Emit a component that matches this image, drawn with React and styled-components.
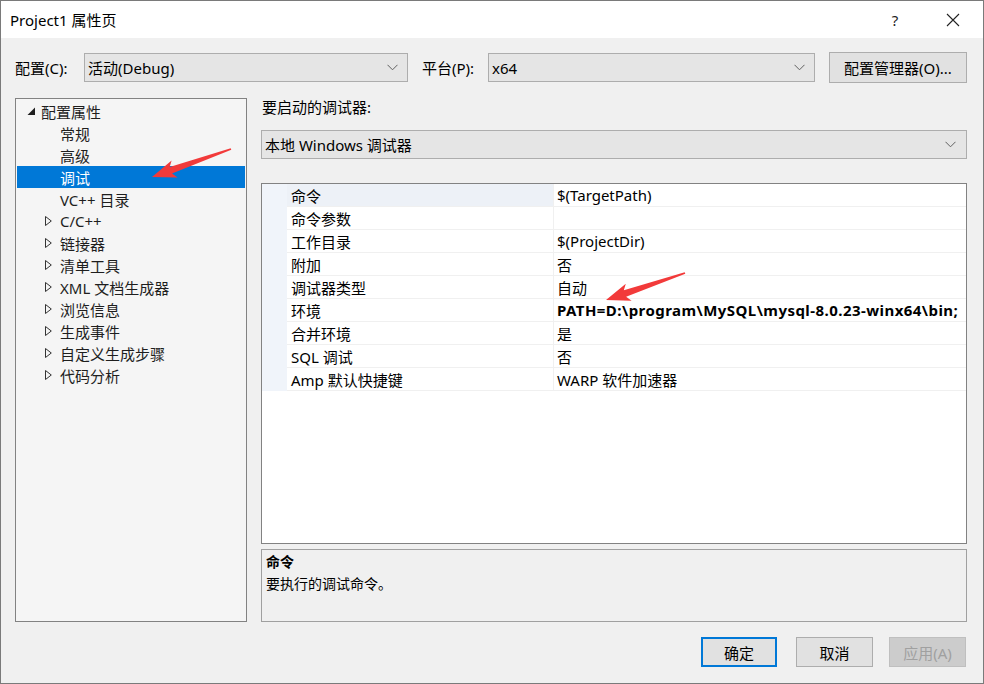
import styled, { createGlobalStyle } from 'styled-components';

const GlobalStyle = createGlobalStyle`
  html, body { margin: 0; padding: 0; background: #f0f0f0; }
  body {
    font-family: "Noto Sans", "Noto Sans CJK SC", sans-serif;
    font-size: 15px;
    color: #000;
  }
  * { box-sizing: border-box; }
`;

const Window = styled.div`
  position: relative;
  width: 984px;
  height: 684px;
  border: 1px solid #7a7a7a;
  background: #f0f0f0;
  display: flex;
  flex-direction: column;
  overflow: hidden;
`;

const TitleBar = styled.div`
  height: 37px;
  background: #fff;
  display: flex;
  align-items: center;
  padding-left: 9px;
  flex-shrink: 0;
`;

const Title = styled.div`
  flex: 1;
  font-size: 15px;
  color: #000;
`;

const CaptionButton = styled.div`
  width: ${p => p.w}px;
  height: 37px;
  display: flex;
  align-items: center;
  justify-content: center;
  font-size: 15px;
  color: #222;
`;

const Body = styled.div`
  flex: 1;
  padding: 14px 16px 0 14px;
  display: flex;
  flex-direction: column;
`;

const ConfigRow = styled.div`
  display: flex;
  align-items: center;
  height: 31px;
  flex-shrink: 0;
`;

const Label = styled.div`
  width: ${p => p.w}px;
  margin-left: ${p => p.ml || 0}px;
  white-space: nowrap;
`;

const Combo = styled.div`
  width: ${p => (p.w ? `${p.w}px` : 'auto')};
  height: 29px;
  flex-shrink: 0;
  background: #e5e5e5;
  border: 1px solid #adadad;
  display: flex;
  align-items: center;
  justify-content: space-between;
  padding: 0 9px 0 3px;
  white-space: nowrap;
`;

const Button = styled.div`
  width: ${p => p.w}px;
  height: ${p => p.h || 30}px;
  margin-left: ${p => p.ml || 0}px;
  flex-shrink: 0;
  background: ${p => (p.disabled ? '#cccccc' : '#e1e1e1')};
  border: ${p => (p.primary ? '2px solid #0078d7' : p.disabled ? '1px solid #bfbfbf' : '1px solid #adadad')};
  color: ${p => (p.disabled ? '#a0a0a0' : '#000')};
  display: flex;
  align-items: center;
  justify-content: center;
  white-space: nowrap;
`;

const Main = styled.div`
  display: flex;
  gap: 14px;
  margin-top: 15px;
  height: 524px;
  flex-shrink: 0;
`;

const Sidebar = styled.div`
  width: 232px;
  border: 1px solid #828282;
  background: #f5f5f5;
  padding: 1px;
`;

const TreeRow = styled.div`
  height: 22px;
  display: flex;
  align-items: center;
  padding-left: ${p => 9 + p.level * 19}px;
  background: ${p => (p.selected ? '#0078d7' : 'transparent')};
  color: ${p => (p.selected ? '#fff' : '#1e1e1e')};
  white-space: nowrap;
`;

const Twisty = styled.div`
  width: 15px;
  height: 22px;
  display: flex;
  align-items: center;
  padding-left: ${p => p.off || 0}px;
`;

const RightPane = styled.div`
  flex: 1;
  display: flex;
  flex-direction: column;
`;

const PaneLabel = styled.div`
  height: 20px;
  line-height: 18px;
  padding-left: 1px;
  flex-shrink: 0;
`;

const WideCombo = styled(Combo)`
  margin-top: 12px;
  padding-right: 10px;
`;

const Grid = styled.div`
  margin-top: 24px;
  height: 361px;
  flex-shrink: 0;
  border: 1px solid #828282;
  background: #fff;
`;

const GridRow = styled.div`
  display: grid;
  grid-template-columns: 25px 267px 1fr;
  height: 23px;
`;

const Strip = styled.div`
  background: #f0f4fa;
`;

const NameCell = styled.div`
  padding-left: 4px;
  display: flex;
  align-items: center;
  background: ${p => (p.active ? '#edf1f7' : '#fff')};
  border-right: 1px solid #f0f0f0;
  border-bottom: 1px solid #f0f0f0;
  white-space: nowrap;
`;

const ValueCell = styled.div`
  padding-left: 3px;
  display: flex;
  align-items: center;
  border-bottom: 1px solid #f0f0f0;
  font-weight: ${p => (p.bold ? 700 : 400)};
  letter-spacing: ${p => (p.bold ? '0.45px' : 'normal')};
  white-space: nowrap;
  overflow: hidden;
`;

const Desc = styled.div`
  margin-top: 5px;
  height: 73px;
  flex-shrink: 0;
  border: 1px solid #a0a0a0;
  background: #f0f0f0;
  padding: 1px 4px;
  font-size: 14px;
  line-height: 22px;
`;

const DescTitle = styled.div`
  font-weight: 700;
`;

const Footer = styled.div`
  display: flex;
  justify-content: flex-end;
  margin-top: 15px;
  padding-right: 1px;
`;

const Overlay = styled.svg`
  position: absolute;
  left: -1px;
  top: -1px;
  pointer-events: none;
`;

const Chevron = () => (
  <svg width="11" height="7" viewBox="0 0 11 7">
    <path d="M0.5 0.8 L5.5 5.8 L10.5 0.8" fill="none" stroke="#606060" strokeWidth="1" />
  </svg>
);

const Expanded = () => (
  <svg width="9" height="9" viewBox="0 0 9 9">
    <polygon points="8,0.5 8,8 0.5,8" fill="#1e1e1e" />
  </svg>
);

const Collapsed = () => (
  <svg width="7" height="10" viewBox="0 0 7 10">
    <polygon points="0.5,0.5 6.3,5 0.5,9.5" fill="none" stroke="#333" strokeWidth="1" />
  </svg>
);

const CloseIcon = () => (
  <svg width="14" height="14" viewBox="0 0 14 14">
    <path d="M1 1 L13 13 M13 1 L1 13" stroke="#222" strokeWidth="1.1" />
  </svg>
);

function arrowPoints(tip, tail) {
  const [tx, ty] = tip;
  const [ex, ey] = tail;
  const dx = ex - tx;
  const dy = ey - ty;
  const len = Math.hypot(dx, dy);
  const ux = dx / len;
  const uy = dy / len;
  const nx = -uy;
  const ny = ux;
  const headLen = 24;
  const bx = tx + ux * headLen;
  const by = ty + uy * headLen;
  const sx = tx + ux * (headLen - 4);
  const sy = ty + uy * (headLen - 4);
  const pts = [
    [tx, ty],
    [bx + nx * 9, by + ny * 9],
    [sx + nx * 3.5, sy + ny * 3.5],
    [ex + nx * 0.8, ey + ny * 0.8],
    [ex - nx * 0.8, ey - ny * 0.8],
    [sx - nx * 3.5, sy - ny * 3.5],
    [bx - nx * 9, by - ny * 9],
  ];
  return pts.map(p => p.map(v => v.toFixed(1)).join(',')).join(' ');
}

const tree = [
  { label: '配置属性', level: 0, twisty: 'open' },
  { label: '常规', level: 1 },
  { label: '高级', level: 1 },
  { label: '调试', level: 1, selected: true },
  { label: 'VC++ 目录', level: 1 },
  { label: 'C/C++', level: 1, twisty: 'closed' },
  { label: '链接器', level: 1, twisty: 'closed' },
  { label: '清单工具', level: 1, twisty: 'closed' },
  { label: 'XML 文档生成器', level: 1, twisty: 'closed' },
  { label: '浏览信息', level: 1, twisty: 'closed' },
  { label: '生成事件', level: 1, twisty: 'closed' },
  { label: '自定义生成步骤', level: 1, twisty: 'closed' },
  { label: '代码分析', level: 1, twisty: 'closed' },
];

const props = [
  { name: '命令', value: '$(TargetPath)', active: true },
  { name: '命令参数', value: '' },
  { name: '工作目录', value: '$(ProjectDir)' },
  { name: '附加', value: '否' },
  { name: '调试器类型', value: '自动' },
  { name: '环境', value: 'PATH=D:\\program\\MySQL\\mysql-8.0.23-winx64\\bin;', bold: true },
  { name: '合并环境', value: '是' },
  { name: 'SQL 调试', value: '否' },
  { name: 'Amp 默认快捷键', value: 'WARP 软件加速器' },
];

export default function App() {
  return (
    <>
      <GlobalStyle />
      <Window>
        <TitleBar>
          <Title>Project1 属性页</Title>
          <CaptionButton w={56}>?</CaptionButton>
          <CaptionButton w={60}><CloseIcon /></CaptionButton>
        </TitleBar>
        <Body>
          <ConfigRow>
            <Label w={69}>配置(C):</Label>
            <Combo w={324}>活动(Debug)<Chevron /></Combo>
            <Label w={66} ml={14}>平台(P):</Label>
            <Combo w={327}>x64<Chevron /></Combo>
            <Button w={138} h={31} ml={14}>配置管理器(O)...</Button>
          </ConfigRow>
          <Main>
            <Sidebar>
              {tree.map(item => (
                <TreeRow key={item.label} level={item.level} selected={item.selected}>
                  <Twisty off={item.level === 0 ? 1 : 0}>
                    {item.twisty === 'open' && <Expanded />}
                    {item.twisty === 'closed' && <Collapsed />}
                  </Twisty>
                  {item.label}
                </TreeRow>
              ))}
            </Sidebar>
            <RightPane>
              <PaneLabel>要启动的调试器:</PaneLabel>
              <WideCombo>本地 Windows 调试器<Chevron /></WideCombo>
              <Grid>
                {props.map(p => (
                  <GridRow key={p.name}>
                    <Strip />
                    <NameCell active={p.active}>{p.name}</NameCell>
                    <ValueCell bold={p.bold}>{p.value}</ValueCell>
                  </GridRow>
                ))}
              </Grid>
              <Desc>
                <DescTitle>命令</DescTitle>
                <div>要执行的调试命令。</div>
              </Desc>
            </RightPane>
          </Main>
          <Footer>
            <Button w={76} primary>确定</Button>
            <Button w={77} ml={19}>取消</Button>
            <Button w={77} ml={16} disabled>应用(A)</Button>
          </Footer>
        </Body>
        <Overlay width="984" height="684" viewBox="0 0 984 684">
          <polygon points={arrowPoints([152, 177], [231, 149])} fill="#f23a3a" />
          <polygon points={arrowPoints([606, 300], [685, 273])} fill="#f23a3a" />
        </Overlay>
      </Window>
    </>
  );
}
